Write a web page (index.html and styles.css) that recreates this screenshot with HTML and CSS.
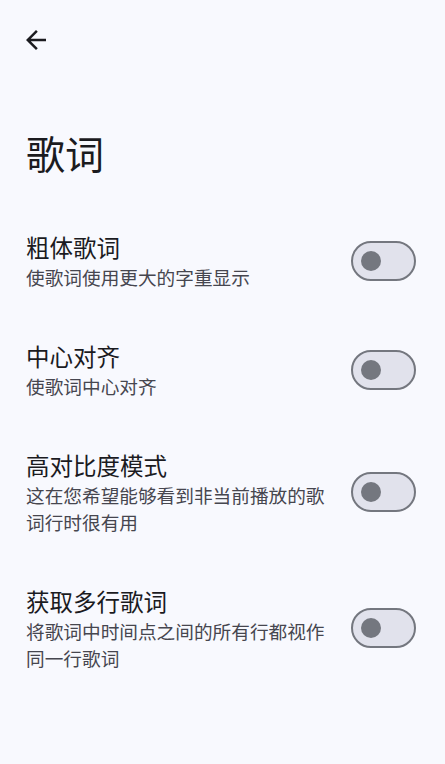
FILE: index.html
```html
<!DOCTYPE html>
<html lang="zh-CN">
<head>
<meta charset="utf-8">
<link rel="stylesheet" href="styles.css">
</head>
<body>
<div class="page">
  <header class="topbar">
    <button class="back" aria-label="返回">
      <svg viewBox="0 0 24 24" width="30" height="30"><path d="M20 11H7.83l5.59-5.59L12 4l-8 8 8 8 1.41-1.41L7.83 13H20v-2z" fill="#1b1b1f"/></svg>
    </button>
  </header>
  <h1 class="title">歌词</h1>
  <ul class="list">
    <li class="row">
      <div class="text">
        <div class="label">粗体歌词</div>
        <div class="desc">使歌词使用更大的字重显示</div>
      </div>
      <span class="switch"><span class="thumb"></span></span>
    </li>
    <li class="row">
      <div class="text">
        <div class="label">中心对齐</div>
        <div class="desc">使歌词中心对齐</div>
      </div>
      <span class="switch"><span class="thumb"></span></span>
    </li>
    <li class="row">
      <div class="text">
        <div class="label">高对比度模式</div>
        <div class="desc">这在您希望能够看到非当前播放的歌词行时很有用</div>
      </div>
      <span class="switch"><span class="thumb"></span></span>
    </li>
    <li class="row">
      <div class="text">
        <div class="label">获取多行歌词</div>
        <div class="desc">将歌词中时间点之间的所有行都视作同一行歌词</div>
      </div>
      <span class="switch"><span class="thumb"></span></span>
    </li>
  </ul>
</div>
</body>
</html>
```
FILE: styles.css
```css
html, body {
  margin: 0;
  padding: 0;
  background: #f8f9fe;
}
body {
  font-family: "Noto Sans CJK SC", "Noto Sans", Roboto, sans-serif;
  color: #1b1b1f;
}
.page {
  width: 445px;
  min-height: 764px;
}
.topbar {
  height: 80px;
  display: flex;
  align-items: flex-start;
  padding: 25px 0 0 21px;
  box-sizing: border-box;
}
.back {
  width: 30px;
  height: 30px;
  padding: 0;
  border: 0;
  background: none;
  display: flex;
}
.title {
  margin: 0;
  padding: 18px 0 0 26px;
  font-size: 39px;
  line-height: 56px;
  font-weight: 400;
  height: 126px;
  box-sizing: border-box;
  display: flex;
  align-items: center;
}
.list {
  list-style: none;
  margin: 0;
  padding: 0;
}
.row {
  display: flex;
  align-items: center;
  gap: 24px;
  padding: 25px 29px 25px 26px;
}
.text {
  flex: 1;
  min-width: 0;
}
.label {
  font-size: 23.5px;
  line-height: 32px;
  color: #1b1b1f;
}
.desc {
  font-size: 18.67px;
  line-height: 27px;
  color: #46464f;
}
.switch {
  flex: none;
  width: 65px;
  height: 40px;
  box-sizing: border-box;
  border: 2.5px solid #74777f;
  border-radius: 20px;
  background: #e1e2ec;
  display: flex;
  align-items: center;
  padding-left: 7.5px;
}
.thumb {
  width: 20px;
  height: 20px;
  border-radius: 50%;
  background: #74777f;
}
```
